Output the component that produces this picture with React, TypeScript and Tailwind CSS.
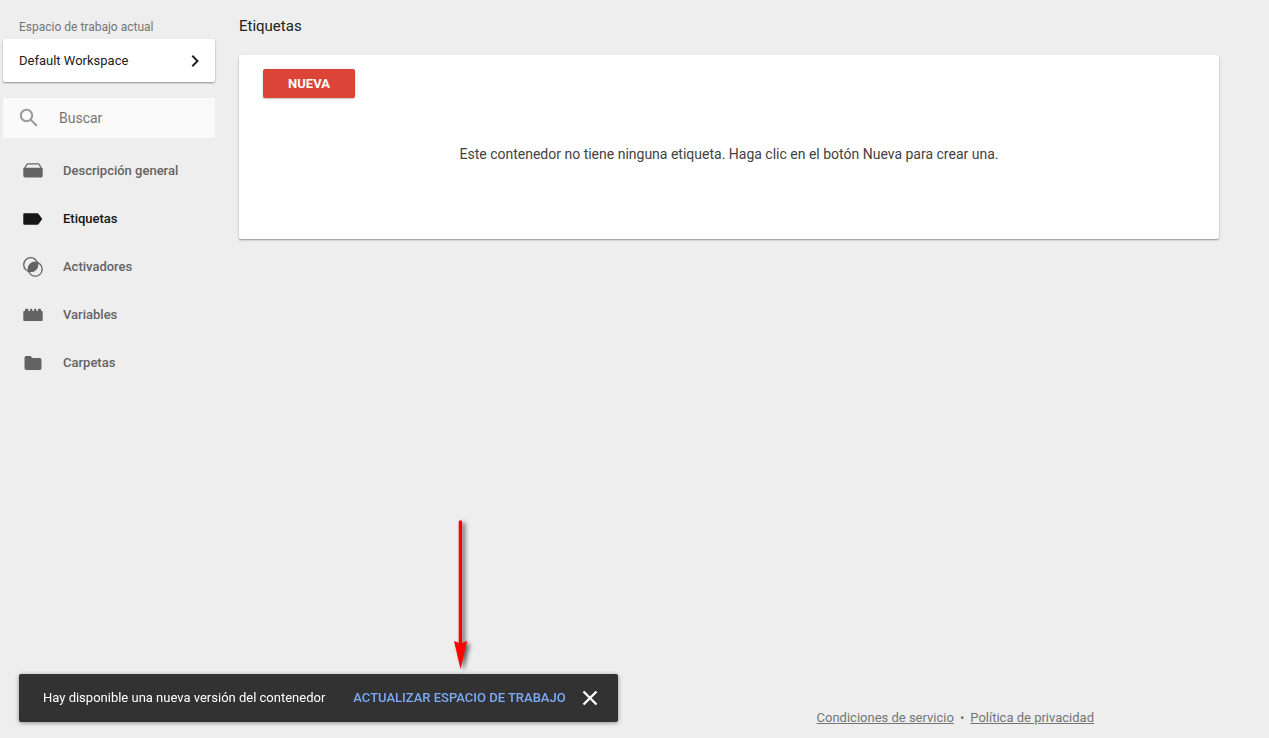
import React, { useState } from 'react';

interface NavItem {
  id: string;
  label: string;
  icon: React.ReactNode;
}

const navItems: NavItem[] = [
  {
    id: 'overview',
    label: 'Descripción general',
    icon: (
      <>
        <path d="M.3 7.500q0-.8.800-.8h17.800q.8 0 .8.800v7.300q0 1.600-1.600 1.600h-16.200q-1.600 0-1.600-1.600z" fill="currentColor" />
        <path d="M1.500 7.500L3.700 3.600Q4.100 2.800 5 2.800h10q.9 0 1.300.8L18.500 7.500" fill="none" stroke="currentColor" strokeWidth="1.200" />
      </>
    ),
  },
  {
    id: 'tags',
    label: 'Etiquetas',
    icon: <path d="M1.300 4.300h13q.8 0 1.300.7L19.300 10l-3.700 5q-.5.7-1.300.7h-13a1 1 0 0 1-1-1v-9.400a1 1 0 0 1 1-1z" fill="currentColor" />,
  },
  {
    id: 'triggers',
    label: 'Activadores',
    icon: (
      <>
        <circle cx="7.700" cy="7.700" r="7" fill="none" stroke="currentColor" strokeWidth="1.300" />
        <circle cx="12.200" cy="12.200" r="7" fill="none" stroke="currentColor" strokeWidth="1.300" />
        <path d="M14.360 5.540A7 7 0 0 1 5.540 14.360A7 7 0 0 1 14.360 5.540z" fill="currentColor" />
      </>
    ),
  },
  {
    id: 'variables',
    label: 'Variables',
    icon: (
      <path
        d="M.3 6.800q0-.8.800-.8H2V4.600q0-.8.800-.8h1.800q.8 0 .8.800V6H7V4.600q0-.8.800-.8h.8q.8 0 .8.800V6H11V4.600q0-.8.800-.8h.8q.8 0 .8.800V6H15V4.600q0-.8.800-.8h1.400q.8 0 .8.800V6h.9q.8 0 .8.800v8.400q0 .8-.8.800h-17.800q-.8 0-.8-.8z"
        fill="currentColor"
      />
    ),
  },
  {
    id: 'folders',
    label: 'Carpetas',
    icon: <path d="M3.200 3h4.300L9.500 5h7.300A1.700 1.700 0 0 1 18.500 6.700v8.600A1.700 1.700 0 0 1 16.800 17H3.200A1.700 1.700 0 0 1 1.500 15.300V4.700A1.700 1.700 0 0 1 3.200 3z" fill="currentColor" />,
  },
];

function Sidebar({ active, onSelect }: { active: string; onSelect: (id: string) => void }) {
  return (
    <aside className="w-[212px] shrink-0 pt-[18px]">
      <div className="pl-4 text-xs leading-[18px] text-[#757575]">Espacio de trabajo actual</div>
      <button className="mt-[3px] flex h-[43px] w-full items-center justify-between rounded-xs bg-white pr-3 pl-4 text-[13px] text-[#212121] shadow-[0_1px_2px_rgba(0,0,0,0.4)]">
        <span>Default Workspace</span>
        <svg className="h-4 w-4" viewBox="0 0 16 16" fill="none" stroke="currentColor" strokeWidth="2" aria-hidden="true">
          <path d="M5.300 2.800L10.500 8L5.300 13.200" />
        </svg>
      </button>

      <label className="mt-4 flex h-10 items-center gap-5 bg-[#fafafa] pl-4">
        <svg className="h-5 w-5 shrink-0 text-[#999]" viewBox="0 0 20 20" fill="none" stroke="currentColor" strokeWidth="2" aria-hidden="true">
          <circle cx="7.500" cy="7.500" r="5.700" />
          <path d="M11.600 11.600L17.800 17.800" />
        </svg>
        <input type="text" aria-label="Buscar" placeholder="Buscar" className="w-full min-w-0 bg-transparent text-sm outline-none placeholder:text-[#757575]" />
      </label>

      <nav className="mt-[9px] flex flex-col">
        {navItems.map((item) => (
          <a
            key={item.id}
            href={`#${item.id}`}
            onClick={() => onSelect(item.id)}
            className={`flex h-12 items-center gap-5 pl-5 text-[13px] font-medium ${active === item.id ? 'text-[#161616]' : 'text-[#636363]'}`}
          >
            <svg className="h-5 w-5 shrink-0" viewBox="0 0 20 20" aria-hidden="true">
              {item.icon}
            </svg>
            {item.label}
          </a>
        ))}
      </nav>
    </aside>
  );
}

function Arrow() {
  return (
    <svg className="pointer-events-none absolute bottom-full left-[430px] h-[160px] w-8" viewBox="0 0 32 160" aria-hidden="true">
      <g className="drop-shadow-[3px_2px_2px_rgba(0,0,0,0.6)]" fill="#f00">
        <path d="M9.700 8a1.700 1.700 0 0 1 3.400 0v121l5-2L11.500 155L5 127l4.700 2z" />
      </g>
    </svg>
  );
}

function Snackbar({ onClose }: { onClose: () => void }) {
  return (
    <div className="fixed bottom-4 left-[19px]">
      <Arrow />
      <div role="status" className="flex h-12 items-center rounded-xs bg-[#323232] pr-4 pl-6 text-[13px] whitespace-nowrap text-white shadow-[0_1px_4px_rgba(0,0,0,0.4)]">
        <span>Hay disponible una nueva versión del contenedor</span>
        <button className="ml-7 font-medium text-[#7baaf7]">ACTUALIZAR ESPACIO DE TRABAJO</button>
        <button aria-label="Cerrar" onClick={onClose} className="ml-3">
          <svg className="h-6 w-6" viewBox="0 0 24 24" fill="none" stroke="currentColor" strokeWidth="2.400" aria-hidden="true">
            <path d="M5.500 5.500L18.500 18.500M18.500 5.500L5.500 18.500" />
          </svg>
        </button>
      </div>
    </div>
  );
}

export default function App() {
  const [active, setActive] = useState('tags');
  const [showSnackbar, setShowSnackbar] = useState(true);

  return (
    <div className="flex min-h-screen flex-col bg-[#eee] font-[Roboto,sans-serif] text-[#212121]">
      <div className="flex flex-1 gap-6 pr-[50px] pl-[3px]">
        <Sidebar active={active} onSelect={setActive} />
        <main className="min-w-0 flex-1 pt-4">
          <h1 className="text-[15px] leading-5">Etiquetas</h1>
          <section className="mt-[19px] h-[184px] rounded-xs bg-white px-6 pt-[14px] shadow-[0_1px_2px_rgba(0,0,0,0.4)]">
            <button className="block h-[29px] w-[92px] rounded-xs bg-[#db4437] text-[13px] font-bold text-white shadow-[0_1px_2px_rgba(0,0,0,0.25)]">NUEVA</button>
            <p className="mt-[46px] text-center text-sm leading-5 text-[#424242]">
              Este contenedor no tiene ninguna etiqueta. Haga clic en el botón Nueva para crear una.
            </p>
          </section>
        </main>
      </div>

      <footer className="flex justify-end gap-[6px] pr-[175px] pb-[10px] text-[13px] leading-5 text-[#757575]">
        <a href="#terms" className="underline">Condiciones de servicio</a>
        <span>•</span>
        <a href="#privacy" className="underline">Política de privacidad</a>
      </footer>

      {showSnackbar && <Snackbar onClose={() => setShowSnackbar(false)} />}
    </div>
  );
}
